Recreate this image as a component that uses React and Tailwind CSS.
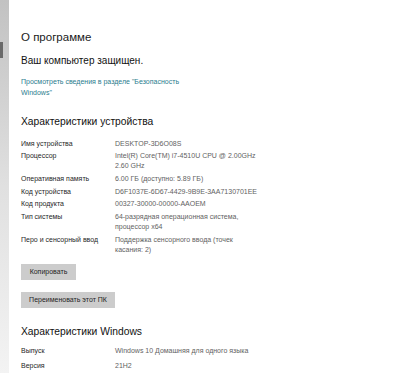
import React from 'react';

const deviceSpecs = [
  { label: 'Имя устройства', value: 'DESKTOP-3D6O08S' },
  { label: 'Процессор', value: 'Intel(R) Core(TM) i7-4510U CPU @ 2.00GHz 2.60 GHz' },
  { label: 'Оперативная память', value: '6.00 ГБ (доступно: 5.89 ГБ)' },
  { label: 'Код устройства', value: 'D6F1037E-6D67-4429-9B9E-3AA7130701EE' },
  { label: 'Код продукта', value: '00327-30000-00000-AAOEM' },
  { label: 'Тип системы', value: '64-разрядная операционная система, процессор x64' },
  { label: 'Перо и сенсорный ввод', value: 'Поддержка сенсорного ввода (точек касания: 2)' },
];

const windowsSpecs = [
  { label: 'Выпуск', value: 'Windows 10 Домашняя для одного языка' },
  { label: 'Версия', value: '21H2' },
];

function SpecRow({ label, value, wide }) {
  return (
    <div className={wide ? 'flex text-[7px] leading-[10px] mb-[5px]' : 'flex text-[7px] leading-[10px] mb-[2.7px]'}>
      <div className="w-[94px] shrink-0 text-[#1f1f1f]">{label}</div>
      <div className={wide ? 'w-[200px] text-[#626262]' : 'w-[146px] text-[#626262]'}>{value}</div>
    </div>
  );
}

export default function App() {
  return (
    <div
      className="w-[400px] h-[373px] overflow-hidden bg-white flex"
      style={{ fontFamily: '"Liberation Sans", Arial, sans-serif' }}
    >
      {/* left nav edge */}
      <div className="relative w-[9px] shrink-0 bg-gradient-to-b from-[#c2c2c2] via-[#e0e0e0] to-[#f3f3f3]">
        <div className="absolute left-0 top-[42px] w-[3px] h-[16px] bg-[#6a6a6a]"></div>
      </div>

      <div className="pl-[12px] pt-[28px] flex-1">
        <div className="text-[11.5px] leading-[18px] text-[#1a1a1a] whitespace-nowrap">О программе</div>
        <p className="mt-[8px] text-[10px] leading-[13px] text-[#111]">Ваш компьютер защищен.</p>
        <a className="block mt-[10px] w-[172px] text-[7px] leading-[10.5px] text-[#2b7d8e]">
          Просмотреть сведения в разделе "Безопасность Windows"
        </a>

        <h2 className="mt-[16.7px] text-[10.3px] leading-[14px] text-[#111]">Характеристики устройства</h2>
        <div className="mt-[10px]">
          {deviceSpecs.map((s) => (
            <SpecRow key={s.label} {...s} />
          ))}
        </div>

        <button className="mt-[9px] block bg-[#cccccc] text-[7px] leading-[16px] text-[#1f1f1f] px-[7px] h-[16px] w-[55px] whitespace-nowrap">
          Копировать
        </button>
        <button className="mt-[12px] block bg-[#cccccc] text-[7px] leading-[16px] text-[#1f1f1f] px-[7px] h-[16px] w-[94px] whitespace-nowrap">
          Переименовать этот ПК
        </button>

        <h2 className="mt-[16.7px] text-[10.3px] leading-[14px] text-[#111]">Характеристики Windows</h2>
        <div className="mt-[7.3px]">
          {windowsSpecs.map((s) => (
            <SpecRow key={s.label} {...s} wide />
          ))}
        </div>
      </div>
    </div>
  );
}
